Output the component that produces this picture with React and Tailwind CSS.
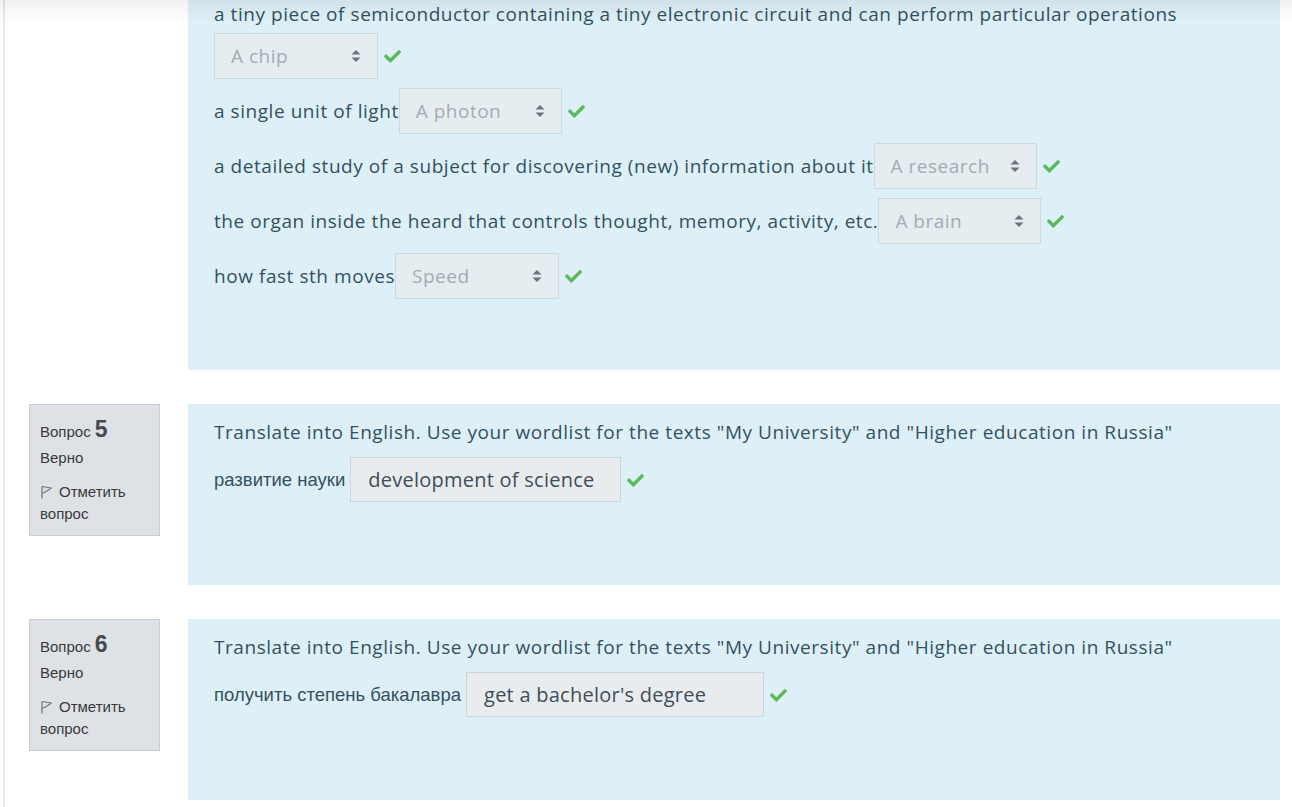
import React from 'react';

const poppins = { fontFamily: '"Open Sans", "Liberation Sans", sans-serif' };
const arial = { fontFamily: '"Liberation Sans", Arial, sans-serif' };

// green tick after each answer
function Tick() {
  return (
    <svg width="17" height="14" viewBox="0 0 512 410" className="shrink-0 ml-[6px]">
      <path
        fill="#5cb85c"
        d="M173.9 400.3L7.5 233.9c-10-10-10-26.2 0-36.2l36.2-36.2c10-10 26.2-10 36.2 0L192 273.6 432.1 33.5c10-10 26.2-10 36.2 0l36.2 36.2c10 10 10 26.2 0 36.2L210.1 400.3c-10 10-26.2 10-36.2 0z"
      />
    </svg>
  );
}

// disabled select like Moodle review
function Select({ value, w = 'w-[164px]' }) {
  return (
    <div className={`${w} h-[46px] shrink-0 flex items-center justify-between pl-[16px] pr-[16px] bg-[#e6edf1] border border-[#cfd8de] text-[#a3abb2] text-[19px] tracking-[0.5px]`}>
      <span>{value}</span>
      <svg width="10" height="14" viewBox="0 0 10 14">
        <path d="M5 1 L9.5 5.5 H0.5 Z" fill="#6b747c" />
        <path d="M5 13 L9.5 8.5 H0.5 Z" fill="#6b747c" />
      </svg>
    </div>
  );
}

function Flag() {
  return (
    <svg width="13" height="14" viewBox="0 0 13 14" className="mr-[6px]">
      <path d="M2 1.5 V13.5" stroke="#6c757d" strokeWidth="1.2" fill="none" />
      <path d="M2 1.5 L11.5 3 L4.5 7.5 L2 8" stroke="#6c757d" strokeWidth="1.1" fill="none" strokeLinejoin="round" />
    </svg>
  );
}

function Info({ num }) {
  return (
    <div className="w-[131px] h-[132px] shrink-0 bg-[#dee2e6] border border-[#c8ced3] px-[10px] pt-[12px] text-[#373a3c] text-[15px] tracking-normal" style={arial}>
      <div className="leading-[24px] h-[24px]">
        <span>Вопрос</span>
        <span className="ml-[4px] text-[23px] font-bold text-[#454a4f]">{num}</span>
      </div>
      <div className="mt-[6px] leading-[22px]">Верно</div>
      <div className="mt-[11px] leading-[23px] flex items-center">
        <Flag />
        <span>Отметить</span>
      </div>
      <div className="leading-[22px]">вопрос</div>
    </div>
  );
}

function Row({ text, value, w }) {
  return (
    <div className="flex items-center h-[46px] mb-[9px]">
      <span>{text}</span>
      <Select value={value} w={w} />
      <Tick />
    </div>
  );
}

function Translate({ ru, answer, w }) {
  return (
    <div className="flex-1 bg-[#def0f7] h-[181px] pl-[26px] pt-[14px]">
      <div className="leading-[28px]">
        Translate into English. Use your wordlist for the texts "My University" and "Higher education in Russia"
      </div>
      <div className="flex items-center mt-[11px]">
        <span className="text-[18.5px] tracking-normal mr-[5px]" style={arial}>{ru}</span>
        <div className={`${w} h-[45px] flex items-center pl-[17px] bg-[#e8ecef] border border-[#cdd3d8] text-[#3f4d57] text-[20px] tracking-[0.25px]`}>
          {answer}
        </div>
        <Tick />
      </div>
    </div>
  );
}

export default function App() {
  return (
    <div className="relative w-[1292px] h-[807px] overflow-hidden bg-white text-[#33505f] text-[19px] tracking-[0.55px]" style={poppins}>
      {/* navbar shadow */}
      <div className="absolute top-0 left-0 right-0 h-[22px] bg-gradient-to-b from-[rgba(0,0,0,0.06)] to-transparent z-10" />

      <div className="flex h-full">
        <div className="w-[3px] shrink-0" />
        <div className="flex-1 border-l-2 border-[#e1eaef] pr-[12px]">

          {/* question 4 (tail) */}
          <div className="flex">
            <div className="w-[183px] shrink-0" />
            <div className="flex-1 bg-[#def0f7] h-[370px] pl-[26px]">
              <div className="leading-[28px] mb-[5px]">
                a tiny piece of semiconductor containing a tiny electronic circuit and can perform particular operations
              </div>
              <div className="flex items-center h-[46px] mb-[9px]">
                <Select value="A chip" />
                <Tick />
              </div>
              <Row text="a single unit of light" value="A photon" w="w-[163px]" />
              <Row text="a detailed study of a subject for discovering (new) information about it" value="A research" w="w-[163px]" />
              <Row text="the organ inside the heard that controls thought, memory, activity, etc." value="A brain" w="w-[163px]" />
              <Row text="how fast sth moves" value="Speed" w="w-[164px]" />
            </div>
          </div>

          {/* question 5 */}
          <div className="flex mt-[34px]">
            <div className="w-[24px] shrink-0" />
            <Info num="5" />
            <div className="w-[28px] shrink-0" />
            <Translate ru="развитие науки" answer="development of science" w="w-[271px]" />
          </div>

          {/* question 6 */}
          <div className="flex mt-[34px]">
            <div className="w-[24px] shrink-0" />
            <Info num="6" />
            <div className="w-[28px] shrink-0" />
            <Translate ru="получить степень бакалавра" answer="get a bachelor's degree" w="w-[298px]" />
          </div>
        </div>
      </div>
    </div>
  );
}
